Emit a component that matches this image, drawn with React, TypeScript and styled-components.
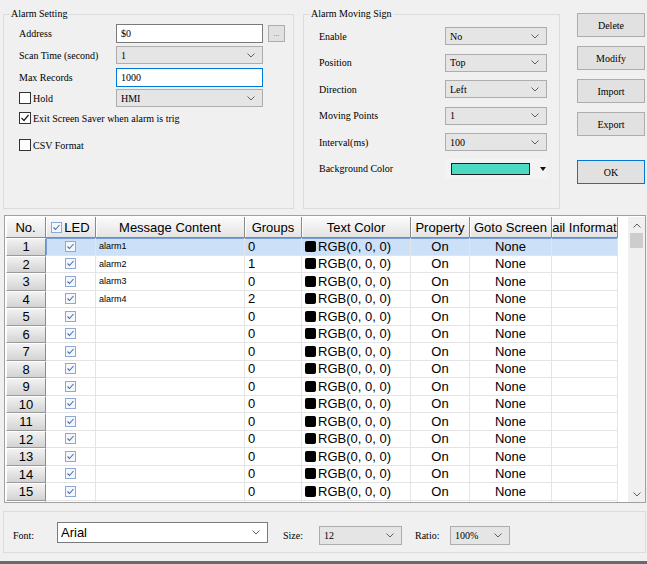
import React from 'react';
import styled, { createGlobalStyle } from 'styled-components';

const GlobalStyle = createGlobalStyle`
  html, body {
    margin: 0;
    padding: 0;
    background: #f0f0f0;
  }
  body {
    width: 647px;
    height: 564px;
    overflow: hidden;
  }
`;

const SERIF = '"Liberation Serif", "Times New Roman", serif';
const SANS = '"Liberation Sans", Arial, sans-serif';

const COLS = '40px 50px 149px 57px 109px 59px 82px 66px';
const BODY_COLS = '50px 149px 57px 109px 59px 82px 66px';

const rows = Array.from({ length: 16 }, (_, i) => ({
  no: i + 1,
  message: i < 4 ? `alarm${i + 1}` : '',
  group: [0, 1, 0, 2][i] ?? 0,
}));

const Chevron = ({ up }: { up?: boolean }) => (
  <svg width="8" height="5" viewBox="0 0 8 5">
    <polyline
      points={up ? '0.5,4.5 4,1 7.5,4.5' : '0.5,0.5 4,4 7.5,0.5'}
      fill="none"
      stroke="#606060"
      strokeWidth="1"
    />
  </svg>
);

const LedCheck = () => (
  <svg width="11" height="11" viewBox="0 0 11 11">
    <rect x="0.5" y="0.5" width="10" height="10" fill="#f4f8fd" stroke="#8ea8d4" />
    <polyline points="2.5,5.5 4.5,7.5 8.5,3" fill="none" stroke="#4a6fb5" strokeWidth="1.1" />
  </svg>
);

const App = () => {
  return (
    <Page>
      <GlobalStyle />
      <TopArea>
        <GroupBox $width={291}>
          <GroupTitle>Alarm Setting</GroupTitle>
          <SettingForm>
            <FieldRow>
              <FieldLabel>Address</FieldLabel>
              <TextBox>$0</TextBox>
              <BrowseButton>...</BrowseButton>
            </FieldRow>
            <FieldRow>
              <FieldLabel>Scan Time (second)</FieldLabel>
              <ComboBox $width={147}>
                <span>1</span>
                <Chevron />
              </ComboBox>
            </FieldRow>
            <FieldRow>
              <FieldLabel>Max Records</FieldLabel>
              <TextBox $focused>1000</TextBox>
            </FieldRow>
            <FieldRow $height={20}>
              <FieldLabel>
                <CheckBox />
                Hold
              </FieldLabel>
              <ComboBox $width={147}>
                <span>HMI</span>
                <Chevron />
              </ComboBox>
            </FieldRow>
            <CheckRow>
              <CheckBox>
                <svg width="10" height="10" viewBox="0 0 10 10">
                  <polyline points="1.5,5 4,7.5 8.5,2" fill="none" stroke="#222" strokeWidth="1.2" />
                </svg>
              </CheckBox>
              Exit Screen Saver when alarm is trig
            </CheckRow>
            <CheckRow $gap={7}>
              <CheckBox />
              CSV Format
            </CheckRow>
          </SettingForm>
        </GroupBox>

        <GroupBox $width={257}>
          <GroupTitle>Alarm Moving Sign</GroupTitle>
          <MovingForm>
            {[
              ['Enable', 'No'],
              ['Position', 'Top'],
              ['Direction', 'Left'],
              ['Moving Points', '1'],
              ['Interval(ms)', '100'],
            ].map(([label, value]) => (
              <MovingRow key={label}>
                <MovingLabel>{label}</MovingLabel>
                <ComboBox $width={102}>
                  <span>{value}</span>
                  <Chevron />
                </ComboBox>
              </MovingRow>
            ))}
            <MovingRow>
              <MovingLabel>Background Color</MovingLabel>
              <ColorPicker>
                <Swatch />
                <svg width="6" height="4" viewBox="0 0 6 4">
                  <polygon points="0,0 6,0 3,4" fill="#111" />
                </svg>
              </ColorPicker>
            </MovingRow>
          </MovingForm>
        </GroupBox>

        <ButtonColumn>
          <DialogButton>Delete</DialogButton>
          <DialogButton>Modify</DialogButton>
          <DialogButton>Import</DialogButton>
          <DialogButton>Export</DialogButton>
          <DialogButton $primary>OK</DialogButton>
        </ButtonColumn>
      </TopArea>

      <TableFrame>
        <GridArea>
          <HeaderRow>
            <HeaderCell>No.</HeaderCell>
            <HeaderCell>
              <LedCheck />
              <span>LED</span>
            </HeaderCell>
            <HeaderCell>Message Content</HeaderCell>
            <HeaderCell>Groups</HeaderCell>
            <HeaderCell>Text Color</HeaderCell>
            <HeaderCell>Property</HeaderCell>
            <HeaderCell>Goto Screen</HeaderCell>
            <ClippedHeader>
              <span>Detail Information</span>
            </ClippedHeader>
          </HeaderRow>
          <TableBody>
            {rows.map((r) => (
              <BodyRow key={r.no}>
                <RowHeader>{r.no}</RowHeader>
                <RowCells $selected={r.no === 1}>
                  <Cell $align="center">
                    <LedCheck />
                  </Cell>
                  <MessageCell>{r.message}</MessageCell>
                  <Cell>{r.group}</Cell>
                  <Cell>
                    <ColorChip />
                    RGB(0, 0, 0)
                  </Cell>
                  <Cell $align="center">On</Cell>
                  <Cell $align="center">None</Cell>
                  <Cell />
                </RowCells>
              </BodyRow>
            ))}
          </TableBody>
        </GridArea>
        <ScrollBar>
          <ScrollArrow>
            <Chevron up />
          </ScrollArrow>
          <ScrollThumb />
          <ScrollTrack />
          <ScrollArrow>
            <Chevron />
          </ScrollArrow>
        </ScrollBar>
      </TableFrame>

      <FontPanel>
        <PanelLabel $width={44}>Font:</PanelLabel>
        <FontCombo>
          <span>Arial</span>
          <Chevron />
        </FontCombo>
        <PanelLabel $width={36} $gap={15}>
          Size:
        </PanelLabel>
        <ComboBox $width={83} $height={19} $offset={4}>
          <span>12</span>
          <Chevron />
        </ComboBox>
        <PanelLabel $width={35} $gap={13}>
          Ratio:
        </PanelLabel>
        <ComboBox $width={60} $height={19} $offset={4}>
          <span>100%</span>
          <Chevron />
        </ComboBox>
      </FontPanel>
      <WindowEdge />
    </Page>
  );
};

const Page = styled.div`
  width: 647px;
  height: 564px;
  display: flex;
  flex-direction: column;
  font-family: ${SERIF};
  font-size: 10px;
  color: #000;
  overflow: hidden;
`;

const TopArea = styled.div`
  display: flex;
  padding: 7px 0 0 3px;
  height: 202px;
`;

const GroupBox = styled.fieldset<{ $width: number }>`
  box-sizing: border-box;
  width: ${(p) => p.$width}px;
  height: 202px;
  margin: 0 9px 0 0;
  padding: 0;
  min-width: 0;
  border: 1px solid #dcdcdc;
  & + & {
    margin-right: 17px;
  }
`;

const GroupTitle = styled.legend`
  margin-left: 6px;
  padding: 0 1px;
  font-size: 10px;
  line-height: 14px;
`;

const SettingForm = styled.div`
  padding: 1px 0 0 15px;
  display: flex;
  flex-direction: column;
`;

const FieldRow = styled.div<{ $height?: number }>`
  display: flex;
  align-items: center;
  height: ${(p) => p.$height ?? 22}px;
`;

const FieldLabel = styled.div`
  width: 97px;
  display: flex;
  align-items: center;
  white-space: nowrap;
`;

const TextBox = styled.div<{ $focused?: boolean }>`
  box-sizing: border-box;
  width: 147px;
  height: 19px;
  display: flex;
  align-items: center;
  padding-left: 4px;
  background: #fff;
  border: 1px solid ${(p) => (p.$focused ? '#0078d7' : '#7a7a7a')};
`;

const BrowseButton = styled.div`
  box-sizing: border-box;
  width: 17px;
  height: 17px;
  margin-left: 5px;
  background: #e1e1e1;
  border: 1px solid #adadad;
  color: #777;
  font-size: 8px;
  display: flex;
  align-items: flex-end;
  justify-content: center;
  padding-bottom: 3px;
  line-height: 8px;
`;

const ComboBox = styled.div<{ $width: number; $height?: number; $offset?: number }>`
  box-sizing: border-box;
  width: ${(p) => p.$width}px;
  height: ${(p) => p.$height ?? 18}px;
  margin-top: ${(p) => p.$offset ?? 0}px;
  display: flex;
  align-items: center;
  justify-content: space-between;
  padding: 0 7px 0 4px;
  background: #e5e5e5;
  border: 1px solid #adadad;
  white-space: nowrap;
`;

const CheckBox = styled.span`
  box-sizing: border-box;
  width: 12px;
  height: 12px;
  margin-right: 2px;
  background: #fff;
  border: 1px solid #333;
  display: inline-flex;
  align-items: center;
  justify-content: center;
  flex: none;
`;

const CheckRow = styled.div<{ $gap?: number }>`
  display: flex;
  align-items: center;
  height: 20px;
  margin-top: ${(p) => p.$gap ?? 0}px;
  white-space: nowrap;
`;

const MovingForm = styled.div`
  padding: 2px 0 0 15px;
  display: flex;
  flex-direction: column;
`;

const MovingRow = styled.div`
  display: flex;
  align-items: center;
  height: 26.5px;
`;

const MovingLabel = styled.div`
  width: 126px;
  white-space: nowrap;
`;

const ColorPicker = styled.div`
  width: 102px;
  height: 20px;
  display: flex;
  align-items: center;
  gap: 10px;
  padding-left: 6px;
  box-sizing: border-box;
  background: #f3f3f3;
`;

const Swatch = styled.div`
  box-sizing: border-box;
  width: 79px;
  height: 12px;
  background: #4cdbc2;
  border: 1px solid #222;
`;

const ButtonColumn = styled.div`
  width: 68px;
  padding-top: 6px;
  display: flex;
  flex-direction: column;
  gap: 9px;
`;

const DialogButton = styled.div<{ $primary?: boolean }>`
  box-sizing: border-box;
  height: 24px;
  margin-top: ${(p) => (p.$primary ? 15 : 0)}px;
  display: flex;
  align-items: center;
  justify-content: center;
  background: #e1e1e1;
  border: 1px solid ${(p) => (p.$primary ? '#0078d7' : '#adadad')};
`;

const TableFrame = styled.div`
  box-sizing: border-box;
  width: 642px;
  height: 288px;
  margin: 6px 0 0 4px;
  padding: 1px 0 0 1px;
  display: flex;
  background: #fff;
  border: 1px solid #a0a0a0;
  font-family: ${SANS};
  font-size: 13px;
`;

const GridArea = styled.div`
  width: 612px;
  margin-right: 10px;
  display: flex;
  flex-direction: column;
`;

const HeaderRow = styled.div`
  display: grid;
  grid-template-columns: ${COLS};
  height: 21px;
  flex: none;
`;

const HeaderCell = styled.div`
  box-sizing: border-box;
  display: flex;
  align-items: center;
  justify-content: center;
  gap: 2px;
  overflow: hidden;
  white-space: nowrap;
  background: linear-gradient(#fbfbfb, #e4e4e4);
  border-right: 1px solid #8a8a8a;
  border-bottom: 1px solid #8a8a8a;
  box-shadow: inset 1px 1px 0 #fff;
`;

/* the column is too narrow for its title, which is clipped on both sides */
const ClippedHeader = styled(HeaderCell)`
  justify-content: flex-start;
  span {
    margin-left: -20px;
  }
`;

const TableBody = styled.div`
  flex: 1;
  overflow: hidden;
`;

const BodyRow = styled.div`
  display: flex;
  height: 17.5px;
`;

const RowHeader = styled.div`
  box-sizing: border-box;
  width: 40px;
  flex: none;
  display: flex;
  align-items: center;
  justify-content: center;
  background: linear-gradient(#f2f2f2, #d3d3d3);
  border-top: 1px solid #fff;
  border-left: 1px solid #fff;
  border-right: 1px solid #8a8a8a;
  border-bottom: 1px solid #9a9a9a;
`;

const RowCells = styled.div<{ $selected?: boolean }>`
  display: grid;
  grid-template-columns: ${BODY_COLS};
  width: 572px;
  background: ${(p) => (p.$selected ? '#cce0f7' : '#fff')};
  box-shadow: ${(p) => (p.$selected ? 'inset 0 0 0 1px #7a9fd6' : 'none')};
`;

const Cell = styled.div<{ $align?: 'left' | 'center' }>`
  box-sizing: border-box;
  display: flex;
  align-items: center;
  justify-content: ${(p) => (p.$align === 'center' ? 'center' : 'flex-start')};
  padding-left: ${(p) => (p.$align === 'center' ? 0 : 3)}px;
  white-space: nowrap;
  overflow: hidden;
  border-right: 1px solid #e4e4e4;
  border-bottom: 1px solid #e4e4e4;
`;

const MessageCell = styled(Cell)`
  font-size: 9px;
`;

const ColorChip = styled.span`
  width: 11px;
  height: 11px;
  margin-right: 2px;
  border-radius: 2px;
  background: #000;
  flex: none;
`;

const ScrollBar = styled.div`
  width: 17px;
  display: flex;
  flex-direction: column;
  background: #f0f0f0;
`;

const ScrollArrow = styled.div`
  height: 16px;
  display: flex;
  align-items: center;
  justify-content: center;
`;

const ScrollThumb = styled.div`
  height: 15px;
  margin: 0 2px;
  background: #cdcdcd;
`;

const ScrollTrack = styled.div`
  flex: 1;
`;

const FontPanel = styled.div`
  box-sizing: border-box;
  width: 643px;
  height: 42px;
  margin: 8px 0 0 3px;
  padding: 10px 0 0 9px;
  display: flex;
  align-items: flex-start;
  border: 1px solid #dcdcdc;
`;

const PanelLabel = styled.div<{ $width: number; $gap?: number }>`
  width: ${(p) => p.$width}px;
  margin-left: ${(p) => p.$gap ?? 0}px;
  margin-top: 4px;
  line-height: 19px;
`;

const FontCombo = styled.div`
  box-sizing: border-box;
  width: 211px;
  height: 21px;
  display: flex;
  align-items: center;
  justify-content: space-between;
  padding: 0 7px 0 3px;
  background: #fff;
  border: 1px solid #7a7a7a;
  font-family: ${SANS};
  font-size: 13px;
`;

const WindowEdge = styled.div`
  height: 3px;
  margin-top: 8px;
  background: #6a6a6a;
`;

export default App;
